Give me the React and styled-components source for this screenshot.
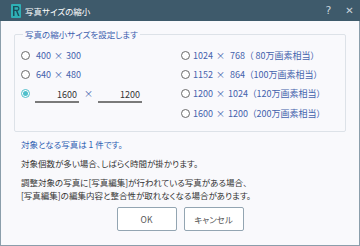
import styled, { createGlobalStyle, css } from 'styled-components';

const Global = createGlobalStyle`
    html, body { margin: 0; padding: 0; background: #f9f9fc; }
    body {
        font-family: "Noto Sans CJK JP", "Noto Sans", sans-serif;
    }
`;

const jp = css`
    font-family: "Noto Sans CJK JP", sans-serif;
    font-feature-settings: "palt" 1;
    font-size: 8.5px;
`;

const Window = styled.div`
    width: 360px;
    height: 246px;
    box-sizing: border-box;
    border: 1px solid #8b9eab;
    border-top: none;
    background: #f9f9fc;
    display: flex;
    flex-direction: column;
`;

const TitleBar = styled.div`
    height: 21px;
    margin: 0 -1px;
    background: #3e5a6b;
    display: flex;
    align-items: center;
    padding: 0 0 0 11px;
    color: #ffffff;
`;

const Title = styled.span`
    ${jp};
    margin-left: 4px;
    flex: 1;
`;

const TitleButton = styled.span`
    width: 21px;
    text-align: center;
    color: #c9d3da;
    font-family: "DejaVu Sans", sans-serif;
    font-size: ${p => p.size || 11}px;
`;

const Body = styled.div`
    padding: 7px 13px 0 13px;
    display: flex;
    flex-direction: column;
`;

const Group = styled.fieldset`
    margin: 0;
    padding: 5px 6px 8px 6px;
    border: 1px solid #dde2e8;
    border-radius: 2px;
    display: grid;
    grid-template-columns: 160px 1fr;
`;

const Legend = styled.legend`
    ${jp};
    padding: 0 2px;
    margin-left: 2px;
    color: #3c5fae;
    line-height: 13px;
`;

const Column = styled.div`
    display: flex;
    flex-direction: column;
`;

const Row = styled.div`
    ${jp};
    font-size: 9px;
    height: 19.2px;
    display: flex;
    align-items: center;
    color: #4462ac;
`;

const Radio = styled.span`
    width: 9px;
    height: 9px;
    box-sizing: border-box;
    border-radius: 50%;
    border: 1px solid ${p => (p.checked ? '#4fbfcb' : '#6a6a6a')};
    background: #ffffff;
    display: inline-flex;
    align-items: center;
    justify-content: center;
    margin-right: ${p => p.gap || 6}px;
    flex-shrink: 0;
    &::after {
        content: '';
        width: 5px;
        height: 5px;
        border-radius: 50%;
        background: ${p => (p.checked ? '#4fbfcb' : 'transparent')};
    }
`;

const Times = styled.span`
    margin: 0 ${p => p.space || 3}px;
`;

const SizeInput = styled.span`
    width: 44px;
    box-sizing: border-box;
    text-align: right;
    padding-right: 2px;
    border-bottom: 2px solid #7a7a7a;
    color: #333333;
    line-height: 12px;
    margin-top: 4px;
`;

const Note = styled.div`
    ${jp};
    margin: 6px 0 0 7px;
    color: #2f5fb3;
    line-height: 12px;
`;

const Text = styled.div`
    ${jp};
    margin: ${p => p.top || 0}px 0 0 7px;
    color: #333333;
    line-height: 13px;
`;

const Buttons = styled.div`
    display: flex;
    justify-content: center;
    gap: 7px;
    margin-top: 5px;
`;

const Button = styled.button`
    ${jp};
    width: 60px;
    height: 24px;
    background: #ffffff;
    border: 1px solid #93a5b2;
    border-radius: 2px;
    color: #555555;
    padding: 0;
`;

const AppIcon = () => (
    <svg width="10" height="14" viewBox="0 0 10 14">
        <rect x="0" y="0" width="10" height="14" rx="1" fill="#2fb0b5" />
        <path d="M2 2 H6.5 Q8.5 2 8.5 4.5 Q8.5 6.5 6.5 7 L8.5 12 H7 L5 7 H3.5 V12 H2 Z" fill="#1b4d5a" />
        <path d="M3.5 3.3 H6.3 Q7.2 3.3 7.2 4.6 Q7.2 5.8 6.3 5.8 H3.5 Z" fill="#2fb0b5" />
    </svg>
);

const App = () => {
    return (
        <>
            <Global />
            <Window>
                <TitleBar>
                    <AppIcon />
                    <Title>写真サイズの縮小</Title>
                    <TitleButton>?</TitleButton>
                    <TitleButton size={10}>✕</TitleButton>
                </TitleBar>
                <Body>
                    <Group>
                        <Legend>写真の縮小サイズを設定します</Legend>
                        <Column>
                            <Row><Radio />400<Times>×</Times>300</Row>
                            <Row><Radio />640<Times>×</Times>480</Row>
                            <Row>
                                <Radio checked gap={5} />
                                <SizeInput>1600</SizeInput>
                                <Times space={5}>×</Times>
                                <SizeInput>1200</SizeInput>
                            </Row>
                        </Column>
                        <Column>
                            <Row><Radio gap={3} />1024<Times>×</Times>&nbsp;768&nbsp;&nbsp;（ 80万画素相当）</Row>
                            <Row><Radio gap={3} />1152<Times>×</Times>&nbsp;864&nbsp;&nbsp;（100万画素相当）</Row>
                            <Row><Radio gap={3} />1200<Times>×</Times>1024&nbsp;&nbsp;（120万画素相当）</Row>
                            <Row><Radio gap={3} />1600<Times>×</Times>1200&nbsp;&nbsp;（200万画素相当）</Row>
                        </Column>
                    </Group>
                    <Note>対象となる写真は 1 件です。</Note>
                    <Text top={7}>対象個数が多い場合、しばらく時間が掛かります。</Text>
                    <Text top={6}>調整対象の写真に[写真編集]が行われている写真がある場合、</Text>
                    <Text>[写真編集]の編集内容と整合性が取れなくなる場合があります。</Text>
                    <Buttons>
                        <Button>OK</Button>
                        <Button>キャンセル</Button>
                    </Buttons>
                </Body>
            </Window>
        </>
    );
};

export default App;
